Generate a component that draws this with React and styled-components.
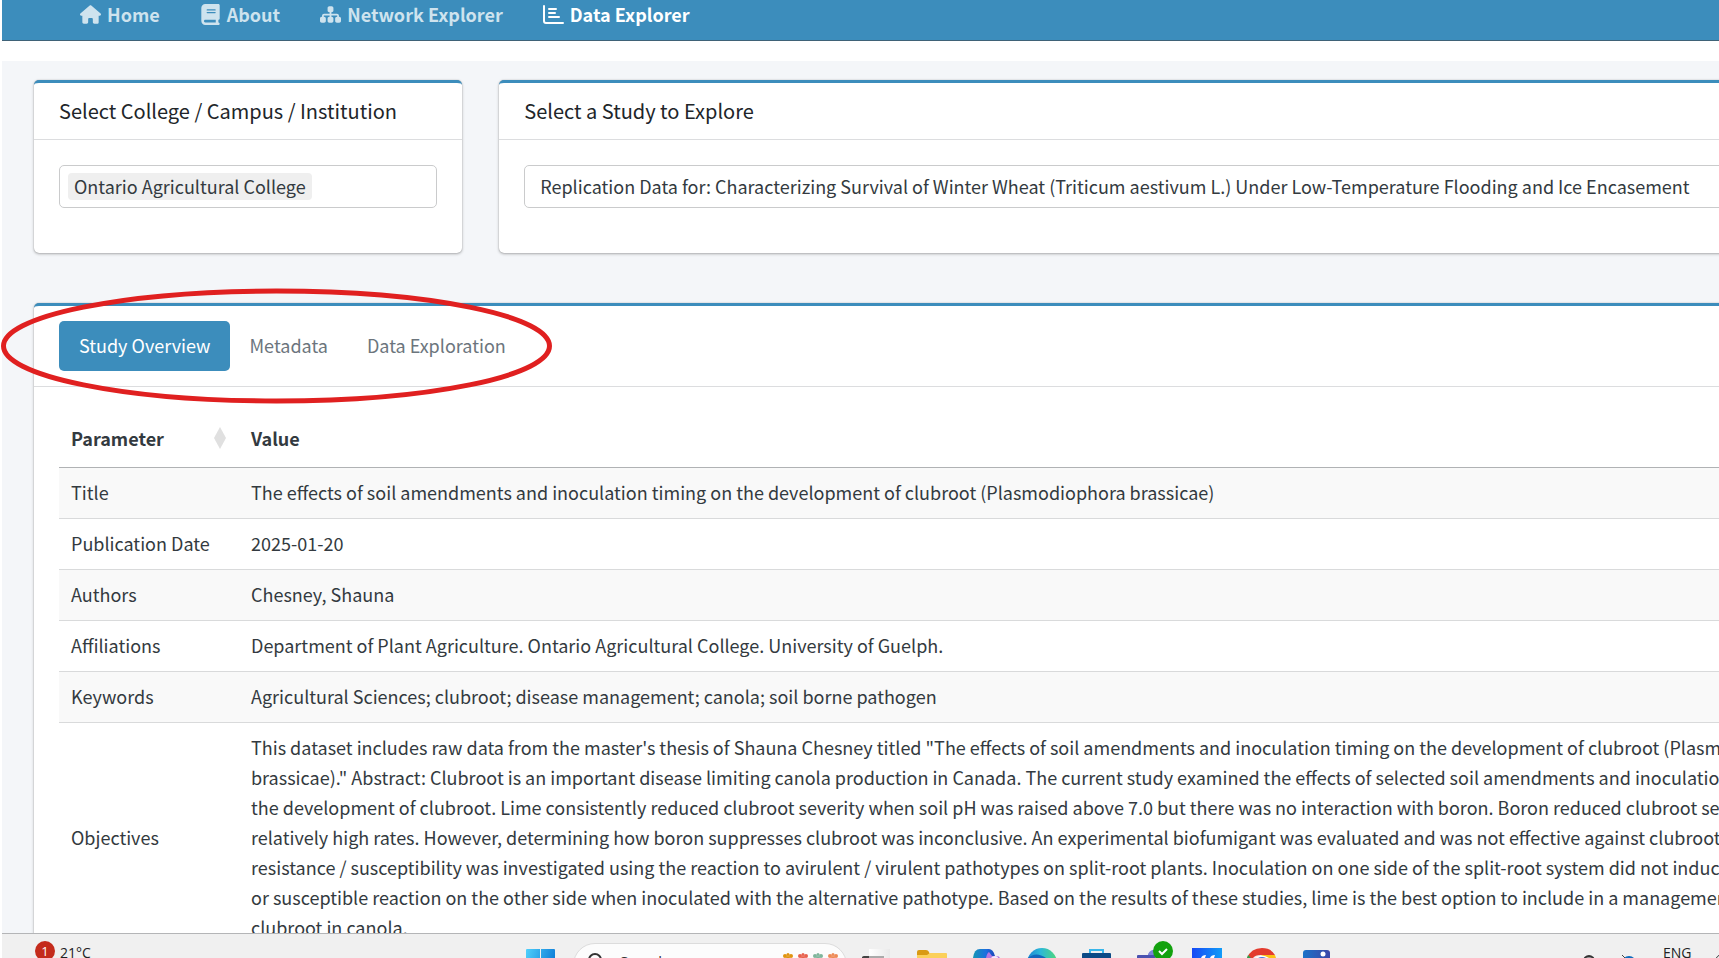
import React from "react";
import styled, { createGlobalStyle } from "styled-components";
import { FaHouse, FaBook, FaSitemap } from "react-icons/fa6";

const Global = createGlobalStyle`
  *, *::before, *::after { box-sizing: border-box; }
  body { margin: 0; background: #fff; overflow: hidden; }
  body, button, input, select { font-family: "Noto Sans CJK SC", "Source Sans Pro", sans-serif; }
`;

const Screen = styled.div`
  height: 100vh;
  display: flex;
  flex-direction: column;
  overflow: hidden;
  color: #333a40;
  font-size: 18px;
  line-height: 30px;
`;

const Viewport = styled.div`
  flex: 1;
  min-height: 0;
  overflow: hidden;
  padding-left: 2px;
  display: flex;
  flex-direction: column;
`;

const Navbar = styled.nav`
  flex: none;
  height: 41px;
  padding: 0 58px;
  background: #3c8dbc;
  border-bottom: 1px solid #3f6277;
  display: flex;
  align-items: flex-start;
`;

const NavLink = styled.a`
  display: flex;
  align-items: center;
  gap: 6px;
  padding: 0 20px;
  color: ${(p) => (p.$active ? "#fff" : "#cee3ee")};
  font-weight: 700;
  line-height: 28px;
  text-decoration: none;
  white-space: nowrap;

  svg {
    width: auto;
    height: 21px;
  }
`;

const Content = styled.main`
  position: relative;
  flex: 1;
  margin-top: 20px;
  padding: 19px 0 0 32px;
  background: #f4f6f9;
`;

const FilterRow = styled.div`
  display: grid;
  grid-template-columns: 1fr 3fr;
  gap: 37px;
  margin-right: -65px;
  margin-bottom: 50px;
`;

const Card = styled.section`
  background: #fff;
  border-top: 3px solid #3c8dbc;
  border-radius: 5px;
  box-shadow: 0 0 1px rgba(0, 0, 0, 0.3), 0 1px 3px rgba(0, 0, 0, 0.3);
`;

const WideCard = styled(Card)`
  margin-right: -120px;
`;

const CardHeader = styled.header`
  padding: ${(p) => (p.$tabs ? "15px 25px" : "14px 25px")};
  border-bottom: 1px solid #dcdddf;
`;

const CardTitle = styled.h3`
  margin: 0;
  font-size: 20px;
  font-weight: 400;
  line-height: 28px;
  color: #212529;
`;

const CardBody = styled.div`
  padding: 25px;
`;

const FilterBody = styled(CardBody)`
  height: 113px;
`;

const TagBox = styled.label`
  display: flex;
  align-items: center;
  height: 43px;
  padding: 0 8px;
  border: 1px solid #cacbcc;
  border-radius: 5px;
`;

const Tag = styled.span`
  flex: none;
  height: 27px;
  padding: 0 6px;
  border-radius: 4px;
  background: #efefef;
  line-height: 27px;
`;

const TagInput = styled.input`
  flex: 1;
  min-width: 0;
  border: 0;
  outline: 0;
  background: transparent;
`;

const StudySelect = styled.select`
  display: block;
  width: 100%;
  height: 43px;
  padding: 0 15px 2px;
  appearance: none;
  border: 1px solid #cacbcc;
  border-radius: 5px;
  background: #fff;
  color: inherit;
  font-size: 18px;
`;

const Tabs = styled.div`
  display: flex;
`;

const Tab = styled.button`
  height: 50px;
  padding: 0 19px 2px 20px;
  border: 0;
  border-radius: 5px;
  background: ${(p) => (p.$active ? "#3c8dbc" : "transparent")};
  color: ${(p) => (p.$active ? "#fff" : "#6c757d")};
  font-size: 18px;
  white-space: nowrap;
`;

const Table = styled.table`
  width: 100%;
  border-collapse: separate;
  border-spacing: 0;
`;

const HeadCell = styled.th`
  min-width: ${(p) => p.$width || "auto"};
  height: 56px;
  padding: 0 12px 4px;
  text-align: left;
  font-weight: 700;
  border-bottom: 1px solid #b0b2b4;
`;

const HeadLabel = styled.span`
  display: flex;
  align-items: center;
  justify-content: space-between;
`;

const Row = styled.tr`
  background: ${(p) => (p.$odd ? "#f9f9f9" : "#fff")};
`;

const Cell = styled.td`
  padding: 9px 12px 11px;
  vertical-align: middle;
  border-bottom: 1px solid #d9dadb;
  white-space: nowrap;
`;

const Line = styled.span`
  display: block;
`;

const Highlight = styled.svg`
  position: absolute;
  left: -1px;
  top: 227px;
  width: 551px;
  height: 116px;
  pointer-events: none;
`;

const Taskbar = styled.footer`
  flex: none;
  height: 25px;
  margin-left: 2px;
  border-top: 1px solid #b4b5b7;
  background: #f0f0f0;
  display: flex;
  align-items: flex-start;
  overflow: hidden;
  color: #222;
  font-family: "Open Sans", sans-serif;
  font-size: 14px;
  line-height: 20px;
`;

const Weather = styled.div`
  width: 511px;
  flex: none;
  display: flex;
  padding: 7px 0 0 33px;
  gap: 5px;
`;

const Badge = styled.span`
  width: 20px;
  height: 20px;
  border-radius: 50%;
  background: #c42b1c;
  color: #fff;
  text-align: center;
  font-size: 13px;
`;

const Label = styled.span`
  padding-top: 2px;
`;

const Slot = styled.svg`
  flex: none;
  width: ${(p) => p.$width || "55px"};
  height: 24px;
`;

const Search = styled.label`
  flex: none;
  width: 274px;
  height: 44px;
  margin: 9px 2px 0 5px;
  padding: 0 4px 0 14px;
  border: 1px solid #dcdcdc;
  border-radius: 22px;
  background: #fcfcfc;
  display: flex;
`;

const SearchInput = styled.input`
  flex: 1;
  min-width: 0;
  height: 20px;
  margin-top: 7px;
  padding: 0 0 0 16px;
  border: 0;
  background: transparent;
  color: #333;
  font-family: inherit;
  font-size: 15px;
  &::placeholder { color: #333; opacity: 1; }
`;

const Tray = styled.div`
  flex: 1;
  display: flex;
  justify-content: flex-end;
`;

const Language = styled.span`
  flex: none;
  width: 66px;
  padding: 9px 0 0 14px;
`;

const navItems = [
  { label: "Home", Icon: FaHouse },
  { label: "About", Icon: FaBook },
  { label: "Network Explorer", Icon: FaSitemap },
  { label: "Data Explorer", Icon: DataIcon, active: true },
];

const rows = [
  ["Title", ["The effects of soil amendments and inoculation timing on the development of clubroot (Plasmodiophora brassicae)"]],
  ["Publication Date", ["2025-01-20"]],
  ["Authors", ["Chesney, Shauna"]],
  ["Affiliations", ["Department of Plant Agriculture. Ontario Agricultural College. University of Guelph."]],
  ["Keywords", ["Agricultural Sciences; clubroot; disease management; canola; soil borne pathogen"]],
  ["Objectives", [
    "This dataset includes raw data from the master's thesis of Shauna Chesney titled \"The effects of soil amendments and inoculation timing on the development of clubroot (Plasmodiophora",
    "brassicae).\" Abstract: Clubroot is an important disease limiting canola production in Canada. The current study examined the effects of selected soil amendments and inoculation timing on",
    "the development of clubroot. Lime consistently reduced clubroot severity when soil pH was raised above 7.0 but there was no interaction with boron. Boron reduced clubroot severity at",
    "relatively high rates. However, determining how boron suppresses clubroot was inconclusive. An experimental biofumigant was evaluated and was not effective against clubroot. Clubroot",
    "resistance / susceptibility was investigated using the reaction to avirulent / virulent pathotypes on split-root plants. Inoculation on one side of the split-root system did not induce a resistant",
    "or susceptible reaction on the other side when inoculated with the alternative pathotype. Based on the results of these studies, lime is the best option to include in a management strategy for",
    "clubroot in canola.",
  ]],
];

const flowers = [["#e0930f", 8], ["#e8604c", 23], ["#7fb59b", 38], ["#ee8a55", 53]];

function DataIcon() {
  return (
    <svg viewBox="0 0 21 21" fill="none" stroke="currentColor" strokeWidth="2" strokeLinecap="round" strokeLinejoin="round">
      <path d="M1 2v15q0 2 2 2h17M6 5h7M6 9h6M6 13h10" />
    </svg>
  );
}

function TaskIcons() {
  return (
    <>
      <Slot viewBox="0 0 55 24">
        <defs>
          <linearGradient id="win" x1="13" y1="15" x2="42" y2="24" gradientUnits="userSpaceOnUse">
            <stop offset="0" stopColor="#4fd0fb" /><stop offset="1" stopColor="#0f7fd8" />
          </linearGradient>
        </defs>
        <path d="M13 16q0-1 1-1h13v9H13zM28 15h13q1 0 1 1v8H28z" fill="url(#win)" />
      </Slot>
      <Search>
        <svg width="16" height="16" viewBox="0 0 16 16">
          <circle cx="7" cy="16" r="6" fill="none" stroke="#333" strokeWidth="2" />
        </svg>
        <SearchInput aria-label="Search" placeholder="Search" />
        <svg width="62" height="24" viewBox="0 0 62 24">
          {flowers.map(([c, x]) => (
            <g key={c} fill={c}>
              <circle cx={x - 3} cy="12" r="2" /><circle cx={x} cy="10.500" r="1.500" /><circle cx={x + 3} cy="12" r="2" />
              <circle cx={x} cy="14" r="2" /><circle cx={x - 4} cy="15" r="1" /><circle cx={x + 4} cy="15" r="1" />
            </g>
          ))}
        </svg>
      </Search>
      <Slot viewBox="0 0 55 24">
        <defs><linearGradient id="tv"><stop offset="0" stopColor="#fff" /><stop offset="1" stopColor="#e9e9e9" /></linearGradient></defs>
        <path d="M13 24v-1q1-1 2-1h20v2z" fill="#444" />
        <path d="M20 15h21v9H35v-1H20z" fill="url(#tv)" />
        <path d="M20 22h15v2H20z" fill="#aaa" />
      </Slot>
      <Slot viewBox="0 0 55 24">
        <path d="M13 18q0-2 2-2h7q2 0 3 2l1 3H13z" fill="#d99a13" />
        <path d="M13 21h10l3-2h16q1 0 1 1v4H13z" fill="#fbd05a" />
      </Slot>
      <Slot viewBox="0 0 55 24">
        <defs><linearGradient id="cp"><stop offset="0" stopColor="#1596b5" /><stop offset=".6" stopColor="#1c6fe0" /><stop offset="1" stopColor="#1c45b8" /></linearGradient></defs>
        <path d="M14 24q1-9 7-9h9q4 0 6 7l-4 2z" fill="url(#cp)" />
        <path d="M27 24q1-5 3-6l3 4h5q2 0 3 2z" fill="#b678e0" />
        <path d="M32 24q1-2 4-2t3 2z" fill="#f4eafc" />
      </Slot>
      <Slot viewBox="0 0 55 24">
        <defs><linearGradient id="ed"><stop offset="0" stopColor="#1b84d4" /><stop offset=".45" stopColor="#2cb8d8" /><stop offset="1" stopColor="#4fd77a" /></linearGradient></defs>
        <circle cx="28" cy="29" r="15" fill="url(#ed)" />
        <path d="M14 24q8-7 18 0z" fill="#1267bd" />
      </Slot>
      <Slot viewBox="0 0 55 24">
        <path d="M21 20v-4h13v4" fill="none" stroke="#38b6ea" strokeWidth="2" />
        <rect x="13" y="19" width="29" height="8" rx="1" fill="#0c4a86" />
      </Slot>
      <Slot viewBox="0 0 55 24">
        <path d="M24 24v-4q3-5 8-4v8z" fill="#7b83d8" />
        <rect x="13" y="21" width="18" height="5" rx="1" fill="#4a52b0" />
        <circle cx="39" cy="17" r="10" fill="#13a10e" />
        <path d="M35 17l3 3 5-5" fill="none" stroke="#fff" strokeWidth="2" />
      </Slot>
      <Slot viewBox="0 0 55 24">
        <defs><linearGradient id="bl"><stop offset="0" stopColor="#1648f5" /><stop offset="1" stopColor="#129cf8" /></linearGradient></defs>
        <rect x="13" y="14" width="30" height="10" fill="url(#bl)" />
        <path d="M22 24q1-3 5-3l-1 3zM31 24q1-3 5-3l-1 3z" fill="#fff" />
      </Slot>
      <Slot viewBox="0 0 55 24">
        <path d="M13 24q4-10 15-10 9 0 13 7H27q-6 0-8 3z" fill="#e33b2e" />
        <path d="M27 21h14l1 3H30z" fill="#fbc116" />
        <path d="M13 24l1-3 3 3z" fill="#2fa24c" />
        <path d="M21 24q7-5 14 0z" fill="#fff" />
        <path d="M24 24q4-2 8 0z" fill="#3b78e7" />
      </Slot>
      <Slot viewBox="0 0 55 24">
        <defs><linearGradient id="ph"><stop offset="0" stopColor="#1b72c8" /><stop offset="1" stopColor="#3b46a8" /></linearGradient></defs>
        <rect x="14" y="16" width="27" height="12" rx="3" fill="url(#ph)" />
        <circle cx="34" cy="20" r="2.500" fill="#fff" />
      </Slot>
    </>
  );
}

export default function App() {
  return (
    <Screen>
      <Global />
      <Viewport>
        <Navbar>
          {navItems.map(({ label, Icon, active }) => (
            <NavLink key={label} href="#" $active={active}>
              <Icon />
              {label}
            </NavLink>
          ))}
        </Navbar>
        <Content>
          <FilterRow>
            <Card>
              <CardHeader><CardTitle>Select College / Campus / Institution</CardTitle></CardHeader>
              <FilterBody>
                <TagBox>
                  <Tag>Ontario Agricultural College</Tag>
                  <TagInput aria-label="Select College / Campus / Institution" />
                </TagBox>
              </FilterBody>
            </Card>
            <Card>
              <CardHeader><CardTitle>Select a Study to Explore</CardTitle></CardHeader>
              <FilterBody>
                <StudySelect aria-label="Select a Study to Explore">
                  <option>Replication Data for: Characterizing Survival of Winter Wheat (Triticum aestivum L.) Under Low-Temperature Flooding and Ice Encasement</option>
                </StudySelect>
              </FilterBody>
            </Card>
          </FilterRow>
          <WideCard>
            <CardHeader $tabs>
              <Tabs role="tablist">
                <Tab role="tab" aria-selected="true" $active>Study Overview</Tab>
                <Tab role="tab" aria-selected="false">Metadata</Tab>
                <Tab role="tab" aria-selected="false">Data Exploration</Tab>
              </Tabs>
            </CardHeader>
            <CardBody>
              <Table>
                <thead>
                  <tr>
                    <HeadCell $width="180px">
                      <HeadLabel>
                        Parameter
                        <svg width="14" height="22" viewBox="0 0 14 22"><path d="M7 0l6 11-6 11L1 11z" fill="#e0e0e0" /></svg>
                      </HeadLabel>
                    </HeadCell>
                    <HeadCell>Value</HeadCell>
                  </tr>
                </thead>
                <tbody>
                  {rows.map(([name, lines], i) => (
                    <Row key={name} $odd={i % 2 === 0}>
                      <Cell>{name}</Cell>
                      <Cell>{lines.map((l) => <Line key={l}>{l}</Line>)}</Cell>
                    </Row>
                  ))}
                </tbody>
              </Table>
            </CardBody>
          </WideCard>
          <Highlight viewBox="0 0 551 116">
            <ellipse cx="275.500" cy="58" rx="273" ry="55" fill="none" stroke="#e02020" strokeWidth="5" />
          </Highlight>
        </Content>
      </Viewport>
      <Taskbar>
        <Weather><Badge>1</Badge><Label>21°C</Label></Weather>
        <TaskIcons />
        <Tray>
          <Slot $width="40px" viewBox="0 0 40 24"><circle cx="20" cy="27" r="5" fill="#999" stroke="#333" strokeWidth="2" /></Slot>
          <Slot $width="40px" viewBox="0 0 40 24"><path d="M15 24q2-2 5-2t5 2z" fill="#0f6cbd" /><path d="M13 21l3 3" stroke="#444" /></Slot>
          <Language>ENG</Language>
          <Slot $width="4px" viewBox="0 0 4 24"><circle cx="6" cy="26" r="5" fill="none" stroke="#333" strokeWidth="1" /></Slot>
        </Tray>
      </Taskbar>
    </Screen>
  );
}
